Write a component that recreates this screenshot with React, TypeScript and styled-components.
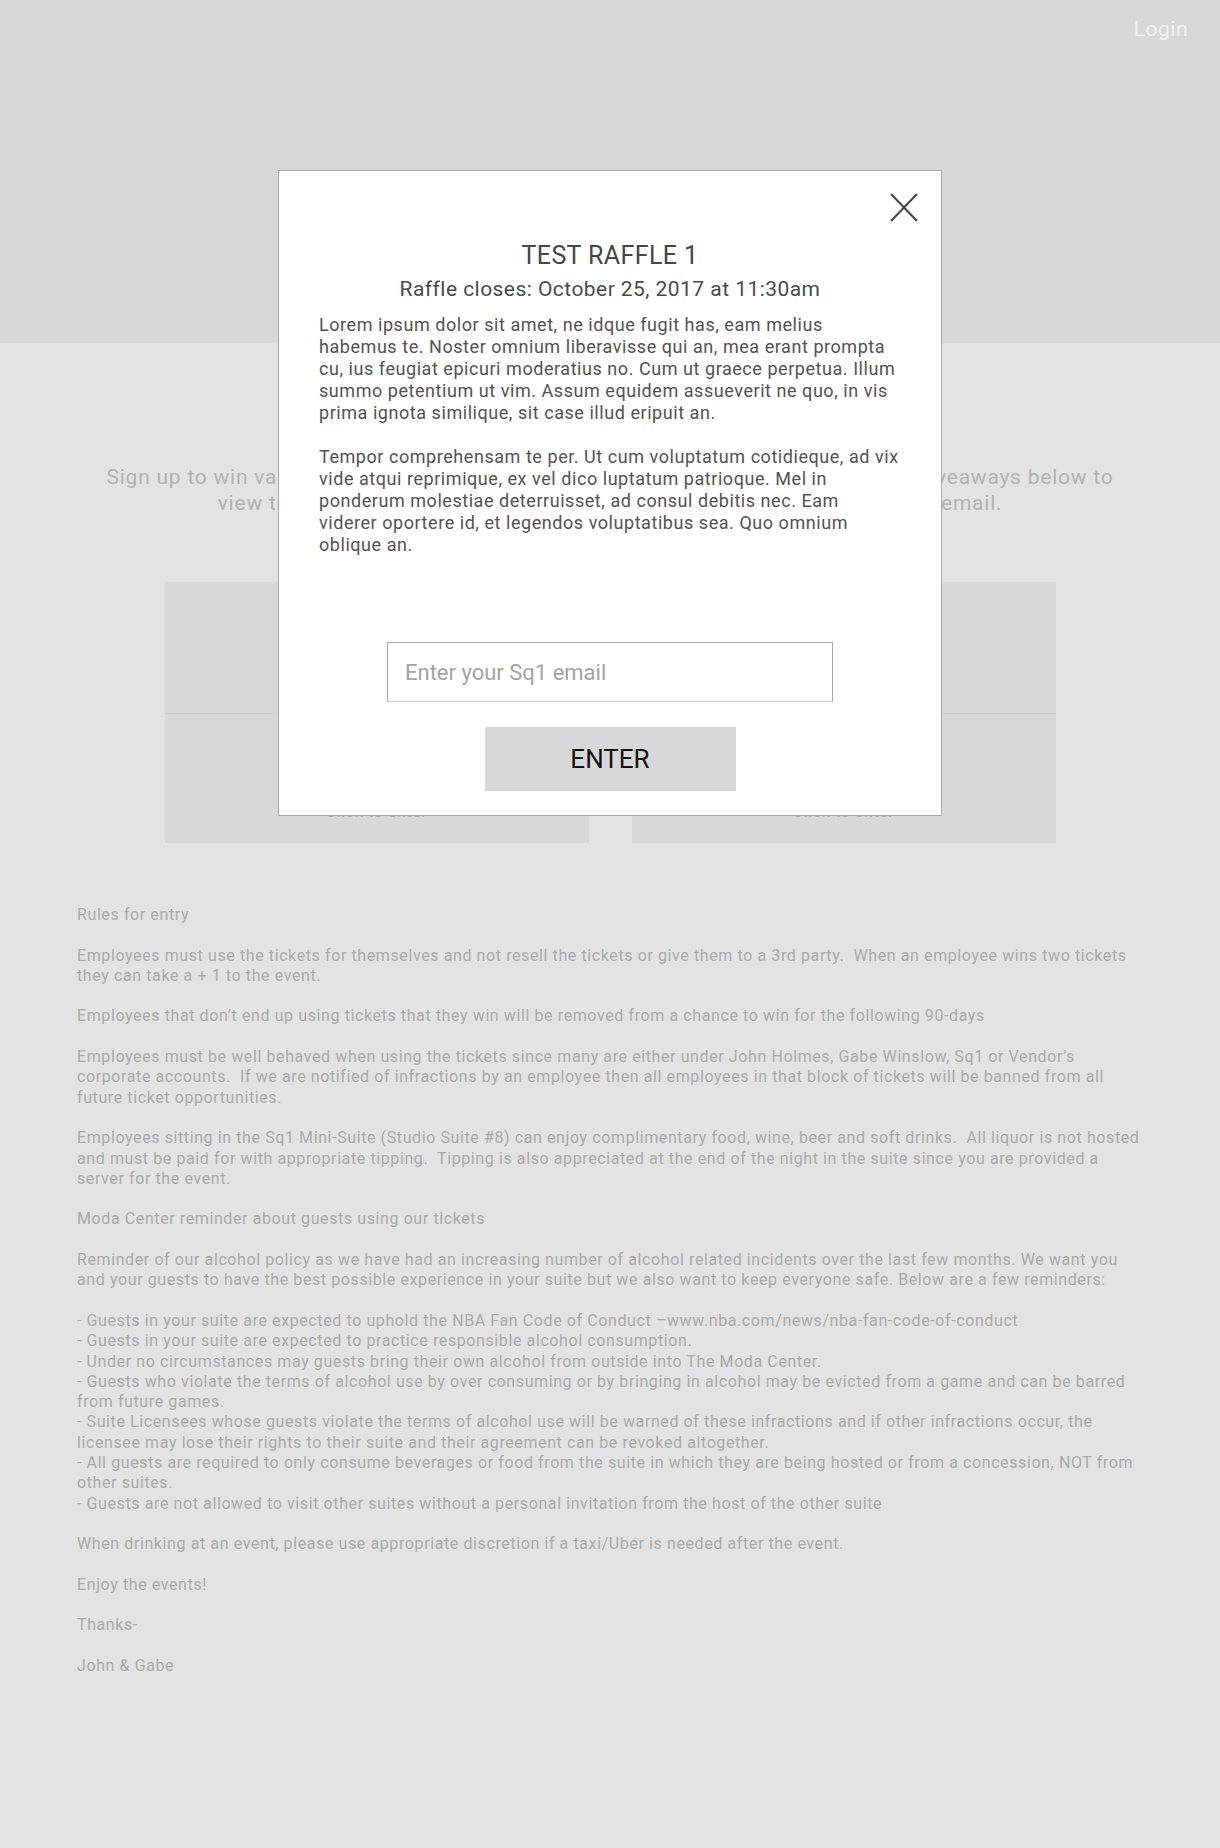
import React from 'react';
import styled, { createGlobalStyle } from 'styled-components';

const GlobalStyle = createGlobalStyle`
  html, body { margin: 0; padding: 0; }
  body {
    background: #e3e3e3;
    font-family: Roboto, "Noto Sans", "Liberation Sans", sans-serif;
  }
  * { box-sizing: border-box; }
`;

const Page = styled.div`
  position: relative;
  min-height: 1848px;
  background: #e3e3e3;
`;

const Header = styled.header`
  height: 343px;
  background: #d8d8d8;
  display: flex;
  justify-content: flex-end;
  align-items: flex-start;
  padding: 16px 32px 0 0;
`;

const LoginLink = styled.a`
  font-size: 21px;
  line-height: 26px;
  letter-spacing: 0.5px;
  color: #f2f2f2;
  text-decoration: none;
  cursor: pointer;
`;

const Main = styled.main`
  padding: 121px 77px 0;
`;

const Intro = styled.p`
  margin: 0;
  text-align: center;
  font-size: 21px;
  line-height: 26px;
  letter-spacing: 0.77px;
  color: #b2b2b2;
`;

const CardGrid = styled.div`
  width: 891px;
  margin: 66px auto 0;
  display: grid;
  grid-template-columns: 424px 424px;
  column-gap: 43px;
`;

const Card = styled.div`
  background: #d8d8d8;
  display: flex;
  flex-direction: column;
`;

const CardImage = styled.div`
  height: 132px;
  border-bottom: 1px solid #cdcdcd;
`;

const CardBody = styled.div`
  height: 129px;
  display: flex;
  flex-direction: column;
  align-items: center;
  padding-top: 30px;
`;

const CardTitle = styled.div`
  font-size: 18px;
  line-height: 24px;
  color: #a5a5a5;
`;

const CardCta = styled.div`
  margin-top: 34px;
  font-size: 16px;
  line-height: 20px;
  letter-spacing: 0.6px;
  color: #a8a8a8;
`;

const Rules = styled.section`
  margin-top: 62px;
  font-size: 16px;
  line-height: 20.3px;
  color: #a9a9a9;
  letter-spacing: 0.6px;
`;

const RulePara = styled.p`
  margin: 0 0 20.3px;
  white-space: pre-wrap;
`;

const Modal = styled.div`
  position: absolute;
  top: 170px;
  left: 278px;
  width: 664px;
  height: 646px;
  background: #ffffff;
  border: 1px solid #a9a9a9;
  padding: 70px 40px 24px;
  display: flex;
  flex-direction: column;
  align-items: center;
`;

const CloseButton = styled.button`
  position: absolute;
  top: 22px;
  right: 23px;
  width: 28px;
  height: 29px;
  padding: 0;
  border: none;
  background: transparent;
  cursor: pointer;
  display: flex;
`;

const ModalTitle = styled.h2`
  margin: 0;
  font-size: 25px;
  line-height: 30px;
  font-weight: 400;
  letter-spacing: 0.4px;
  color: #454545;
  text-align: center;
`;

const ModalSubtitle = styled.div`
  margin-top: 5px;
  font-size: 21px;
  line-height: 26px;
  letter-spacing: 0.45px;
  color: #4a4a4a;
  text-align: center;
`;

const ModalBody = styled.div`
  margin-top: 12px;
  align-self: stretch;
  font-size: 18px;
  line-height: 22px;
  letter-spacing: 0.55px;
  color: #525252;
  white-space: nowrap;
`;

const BodyPara = styled.p`
  margin: 0 0 22px;
  &:last-child { margin-bottom: 0; }
`;

const EmailInput = styled.input`
  margin-top: 86px;
  width: 446px;
  height: 60px;
  border: 1px solid #a9a9a9;
  border-bottom-color: #c8c8c8;
  padding: 0 17px;
  font-family: inherit;
  font-size: 22px;
  color: #333;
  outline: none;
  &::placeholder { color: #a3a3a3; }
`;

const EnterButton = styled.button`
  margin-top: 25px;
  width: 251px;
  height: 64px;
  border: none;
  background: #d8d8d8;
  font-family: inherit;
  font-size: 26px;
  color: #111;
  cursor: pointer;
`;

const bodyParagraphs: string[][] = [
  [
    'Lorem ipsum dolor sit amet, ne idque fugit has, eam melius',
    'habemus te. Noster omnium liberavisse qui an, mea erant prompta',
    'cu, ius feugiat epicuri moderatius no. Cum ut graece perpetua. Illum',
    'summo petentium ut vim. Assum equidem assueverit ne quo, in vis',
    'prima ignota similique, sit case illud eripuit an.',
  ],
  [
    'Tempor comprehensam te per. Ut cum voluptatum cotidieque, ad vix',
    'vide atqui reprimique, ex vel dico luptatum patrioque. Mel in',
    'ponderum molestiae deterruisset, ad consul debitis nec. Eam',
    'viderer oportere id, et legendos voluptatibus sea. Quo omnium',
    'oblique an.',
  ],
];

const rules: string[] = [
  'Rules for entry',
  'Employees must use the tickets for themselves and not resell the tickets or give them to a 3rd party.  When an employee wins two tickets they can take a + 1 to the event.',
  'Employees that don\u2019t end up using tickets that they win will be removed from a chance to win for the following 90-days',
  'Employees must be well behaved when using the tickets since many are either under John Holmes, Gabe Winslow, Sq1 or Vendor\u2019s corporate accounts.  If we are notified of infractions by an employee then all employees in that block of tickets will be banned from all future ticket opportunities.',
  'Employees sitting in the Sq1 Mini-Suite (Studio Suite #8) can enjoy complimentary food, wine, beer and soft drinks.  All liquor is not hosted and must be paid for with appropriate tipping.  Tipping is also appreciated at the end of the night in the suite since you are provided a server for the event.',
  'Moda Center reminder about guests using our tickets',
  'Reminder of our alcohol policy as we have had an increasing number of alcohol related incidents over the last few months. We want you and your guests to have the best possible experience in your suite but we also want to keep everyone safe. Below are a few reminders:',
  '- Guests in your suite are expected to uphold the NBA Fan Code of Conduct \u2013www.nba.com/news/nba-fan-code-of-conduct\n- Guests in your suite are expected to practice responsible alcohol consumption.\n- Under no circumstances may guests bring their own alcohol from outside into The Moda Center.\n- Guests who violate the terms of alcohol use by over consuming or by bringing in alcohol may be evicted from a game and can be barred from future games.\n- Suite Licensees whose guests violate the terms of alcohol use will be warned of these infractions and if other infractions occur, the licensee may lose their rights to their suite and their agreement can be revoked altogether.\n- All guests are required to only consume beverages or food from the suite in which they are being hosted or from a concession, NOT from other suites.\n- Guests are not allowed to visit other suites without a personal invitation from the host of the other suite',
  'When drinking at an event, please use appropriate discretion if a taxi/Uber is needed after the event.',
  'Enjoy the events!',
  'Thanks-',
  'John & Gabe',
];

const cards = [
  { title: 'Test Raffle 1' },
  { title: 'Test Raffle 2' },
];

export default function App() {
  return (
    <Page>
      <GlobalStyle />
      <Header>
        <LoginLink>Login</LoginLink>
      </Header>
      <Main>
        <Intro>
          Sign up to win various Sq1 sponsored tickets and giveaways. Click on one of the giveaways below to
          <br />
          view the details and enter for a chance to win free tickets with your Sq1 email.
        </Intro>
        <CardGrid>
          {cards.map((c) => (
            <Card key={c.title}>
              <CardImage />
              <CardBody>
                <CardTitle>{c.title}</CardTitle>
                <CardCta>Click to enter</CardCta>
              </CardBody>
            </Card>
          ))}
        </CardGrid>
        <Rules>
          {rules.map((r, i) => (
            <RulePara key={i}>{r}</RulePara>
          ))}
        </Rules>
      </Main>
      <Modal role="dialog">
        <CloseButton aria-label="Close">
          <svg width="28" height="29" viewBox="0 0 28 29" fill="none">
            <path d="M1 1 L27 28 M27 1 L1 28" stroke="#444" strokeWidth="2" />
          </svg>
        </CloseButton>
        <ModalTitle>TEST RAFFLE 1</ModalTitle>
        <ModalSubtitle>Raffle closes: October 25, 2017 at 11:30am</ModalSubtitle>
        <ModalBody>
          {bodyParagraphs.map((lines, pi) => (
            <BodyPara key={pi}>
              {lines.map((line, li) => (
                <React.Fragment key={li}>
                  {line}
                  {li < lines.length - 1 && <br />}
                </React.Fragment>
              ))}
            </BodyPara>
          ))}
        </ModalBody>
        <EmailInput type="email" placeholder="Enter your Sq1 email" />
        <EnterButton>ENTER</EnterButton>
      </Modal>
    </Page>
  );
}
